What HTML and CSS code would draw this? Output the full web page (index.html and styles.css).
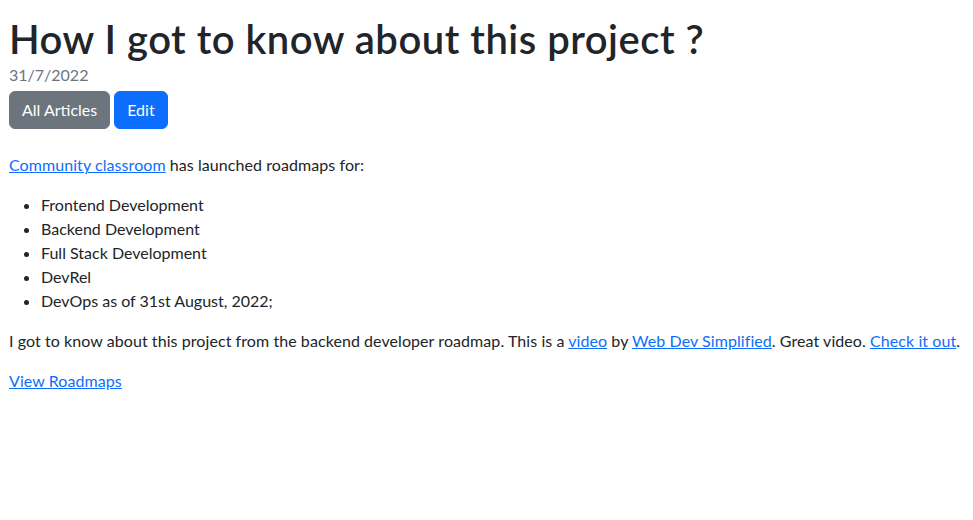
FILE: index.html
```html
<!DOCTYPE html>
<html lang="en">
<head>
<meta charset="utf-8">
<title>How I got to know about this project ?</title>
<link rel="stylesheet" href="styles.css">
</head>
<body>
<main class="article">
  <h1 class="title">How I got to know about this project ?</h1>
  <div class="date">31/7/2022</div>
  <div class="actions">
    <a class="btn btn-secondary" href="#">All Articles</a>
    <a class="btn btn-primary" href="#">Edit</a>
  </div>
  <div class="content">
    <p><a href="#">Community classroom</a> has launched roadmaps for:</p>
    <ul>
      <li>Frontend Development</li>
      <li>Backend Development</li>
      <li>Full Stack Development</li>
      <li>DevRel</li>
      <li>DevOps as of 31st August, 2022;</li>
    </ul>
    <p>I got to know about this project from the backend developer roadmap. This is a <a href="#">video</a> by <a href="#">Web Dev Simplified</a>. Great video. <a href="#">Check it out</a>.</p>
    <p><a href="#">View Roadmaps</a></p>
  </div>
</main>
</body>
</html>
```
FILE: styles.css
```css
html, body { margin: 0; padding: 0; background: #fff; }
body {
  font-family: Lato, "Open Sans", sans-serif;
  font-size: 16px;
  line-height: 24px;
  color: #212529;
}
.article { padding: 15px 9px 0 9px; }
.title {
  margin: 0;
  font-size: 40px;
  line-height: 48px;
  font-weight: 600;
  letter-spacing: 0.5px;
  white-space: nowrap;
}
.date { color: #6c757d; }
.actions { display: flex; gap: 4px; margin-top: 4px; margin-bottom: 24px; }
.btn {
  display: inline-block;
  padding: 6px 12px;
  border: 1px solid transparent;
  border-radius: 6px;
  color: #fff;
  text-decoration: none;
  line-height: 24px;
}
.btn-secondary { background: #6c757d; border-color: #6c757d; }
.btn-primary { background: #0d6efd; border-color: #0d6efd; }
.content p { margin: 0 0 16px 0; white-space: nowrap; letter-spacing: 0.07px; }
.content ul { margin: 0 0 16px 0; padding-left: 32px; }
.content a { color: #0d6efd; text-decoration: underline; }
```
